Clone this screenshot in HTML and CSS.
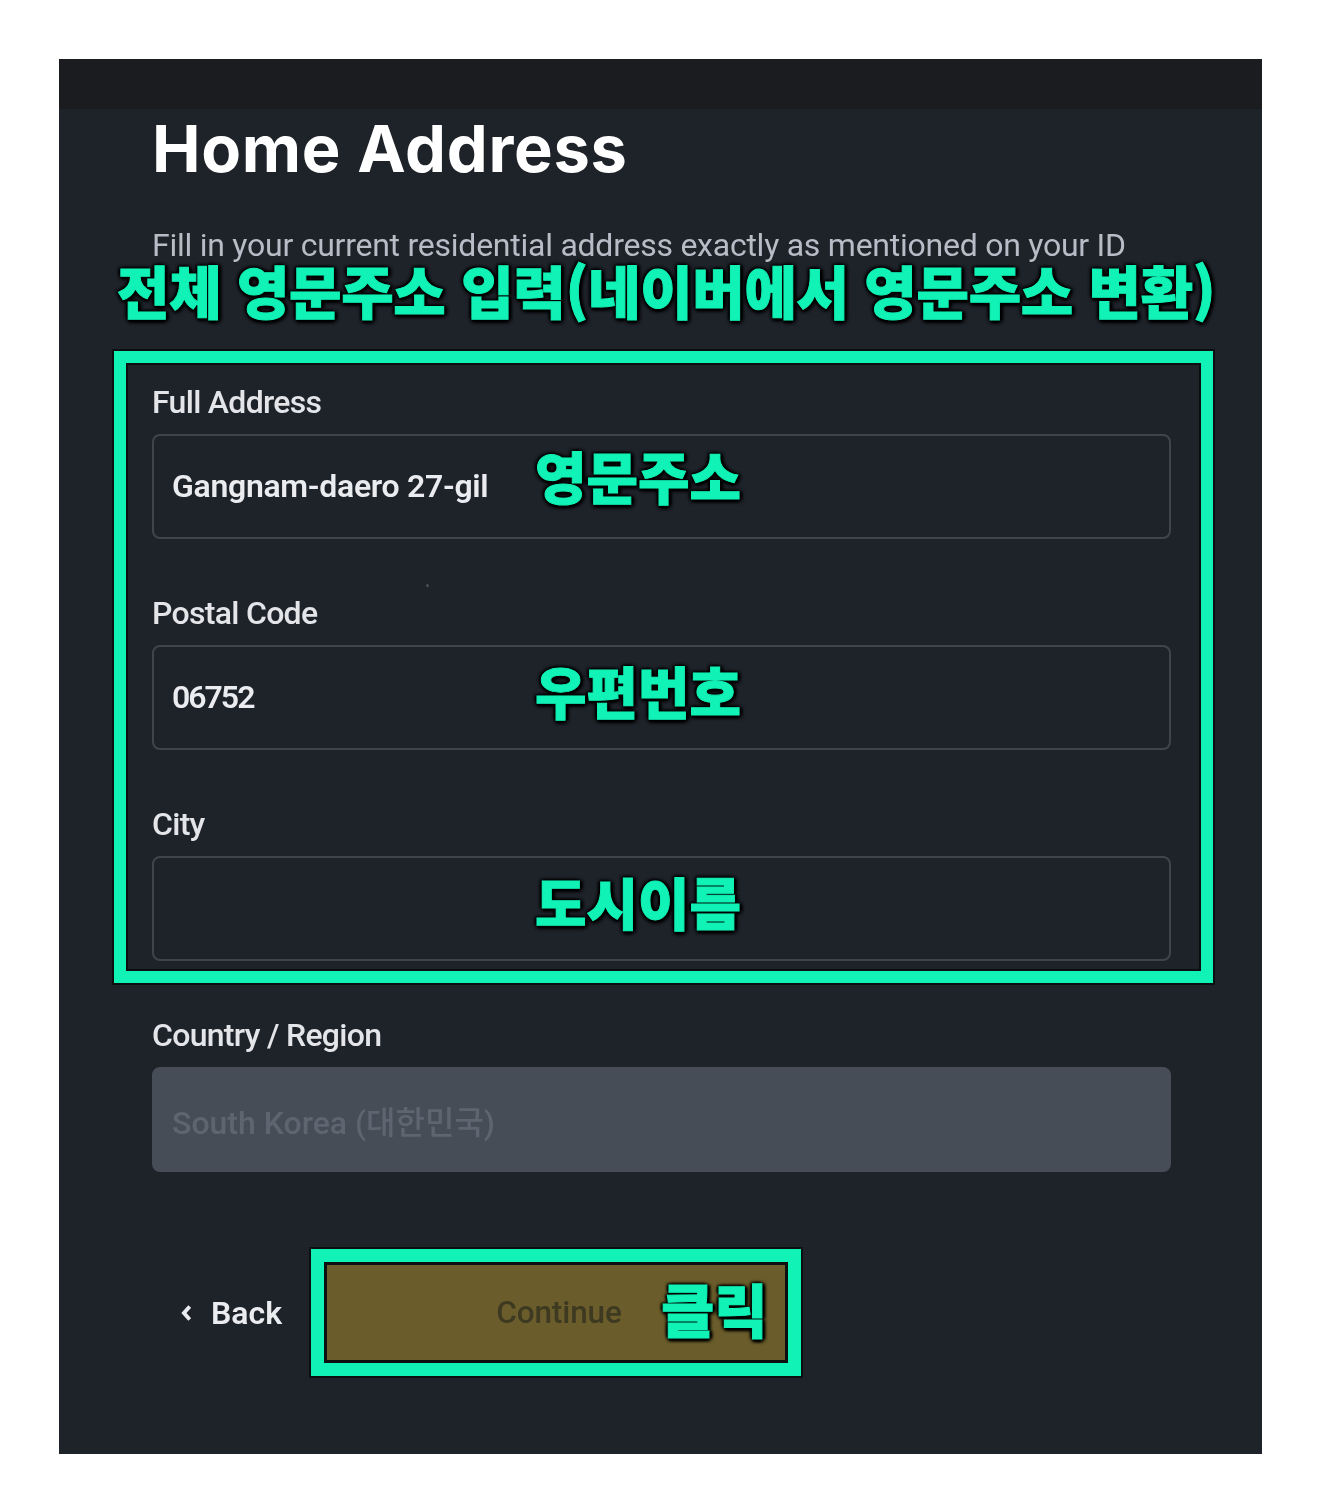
FILE: index.html
```html
<!DOCTYPE html>
<html lang="ko">
<head>
<meta charset="utf-8">
<title>Home Address</title>
<link rel="stylesheet" href="styles.css">
</head>
<body>
<div class="card">
  <div class="topbar"></div>
  <main class="main">
    <h1 class="title">Home Address</h1>
    <p class="subtitle">Fill in your current residential address exactly as mentioned on your ID</p>
    <div class="notice mark">전체 영문주소 입력(네이버에서 영문주소 변환)</div>
    <section class="frame">
      <div class="field">
        <label class="label">Full Address</label>
        <div class="input"><span class="value">Gangnam-daero 27-gil</span><span class="tag tag-up mark">영문주소</span></div>
        <i class="speck"></i>
      </div>
      <div class="field">
        <label class="label">Postal Code</label>
        <div class="input"><span class="value digits">06752</span><span class="tag mark">우편번호</span></div>
      </div>
      <div class="field">
        <label class="label">City</label>
        <div class="input"><span class="tag mark">도시이름</span></div>
      </div>
    </section>
    <div class="field country">
      <label class="label">Country / Region</label>
      <div class="input disabled"><span class="value">South Korea (대한민국)</span></div>
    </div>
    <div class="actions">
      <div class="back">
        <svg class="chevron" viewBox="0 0 10 14" aria-hidden="true"><path d="M7.5 2 3 7l4.500 5" fill="none" stroke="currentColor" stroke-width="3"/></svg>
        <span>Back</span>
      </div>
      <div class="continue-frame">
        <div class="continue"><span class="continue-text">Continue</span><span class="click mark">클릭</span></div>
      </div>
    </div>
  </main>
</div>
</body>
</html>
```
FILE: styles.css
```css
* { box-sizing: border-box; }
html, body { margin: 0; background: #fff; }
body { padding: 59px 58px 58px 59px; font-family: Roboto, "Noto Sans CJK KR", sans-serif; }
.card { width: 1203px; height: 1395px; background: #1e2229; filter: blur(0.6px); overflow: hidden; }
.topbar { height: 50px; background: #1a1c20; }
.main { padding: 0 49px 0 55px; }
.title { margin: 0 0 0 38px; height: 80px; line-height: 80px; font-family: Inter, sans-serif; font-size: 65px; font-weight: 700; color: #fff; letter-spacing: 0.7px; white-space: nowrap; }
.subtitle { margin: 36px 0 0 38px; height: 40px; line-height: 40px; font-size: 32px; color: #b7bdc6; letter-spacing: -0.25px; white-space: nowrap; }
.mark {
  font-family: "Noto Sans CJK KR", sans-serif;
  font-weight: 900;
  color: #10f2b6;
  -webkit-text-stroke: 1px #10f2b6;
  text-shadow: 0 0 4px #000, 0 0 4px #000, 0 0 3px #000, 2px 2px 4px #000, -2px -1px 3px #000, 3px 0 3px #000, 0 3px 3px #000;
}
.notice { margin: -6px 0 0 3px; height: 60px; line-height: 60px; font-size: 57px; letter-spacing: -0.3px; white-space: nowrap; }
.frame { margin-top: 32px; height: 632px; padding: 18.500px 30px 10px 26px; border: 12px solid #10f2b6; box-shadow: 0 0 0 2px #0c0f10, inset 0 0 0 2px #0c0f10; display: flex; flex-direction: column; gap: 54px; }
.field { position: relative; }
.label { display: block; height: 40px; line-height: 40px; margin-bottom: 12px; font-size: 32px; font-weight: 500; color: #e3e5e8; letter-spacing: -0.7px; white-space: nowrap; }
.input { position: relative; height: 105px; border: 2px solid #3f444d; border-radius: 8px; padding: 0 0 0 18px; display: flex; align-items: center; }
.value { font-size: 32px; font-weight: 600; color: #eaecef; letter-spacing: -0.3px; white-space: nowrap; }
.digits { letter-spacing: -2px; }
.tag { position: absolute; left: 381px; top: 8px; line-height: 70px; font-size: 56px; letter-spacing: 0; white-space: nowrap; }
.tag-up { top: 4px; }
.speck { position: absolute; left: 274px; top: 202px; width: 3px; height: 3px; border-radius: 50%; background: #4a4f58; }
.country { margin: 32px 42px 0 38px; }
.disabled { background: #474d57; border-color: #474d57; }
.disabled .value { font-weight: 500; color: #5e6570; letter-spacing: 0; }
.actions { margin-top: 77px; display: flex; align-items: center; }
.back { width: 197px; padding-left: 66px; display: flex; align-items: center; gap: 18px; font-size: 32px; font-weight: 600; color: #eaecef; }
.chevron { width: 13px; height: 18px; flex: none; }
.continue-frame { width: 490px; height: 127px; border: 13px solid #10f2b6; box-shadow: 0 0 0 2px #0c0f10; padding: 3px; background: #0c100e; }
.continue { position: relative; height: 100%; padding-left: 6px; background: #6b5d2b; display: flex; align-items: center; justify-content: center; }
.continue-text { font-size: 31.500px; font-weight: 500; color: #3e3a22; letter-spacing: -0.1px; }
.click { position: absolute; left: 334px; top: 8px; line-height: 70px; font-size: 58px; letter-spacing: 0; white-space: nowrap; }
```
